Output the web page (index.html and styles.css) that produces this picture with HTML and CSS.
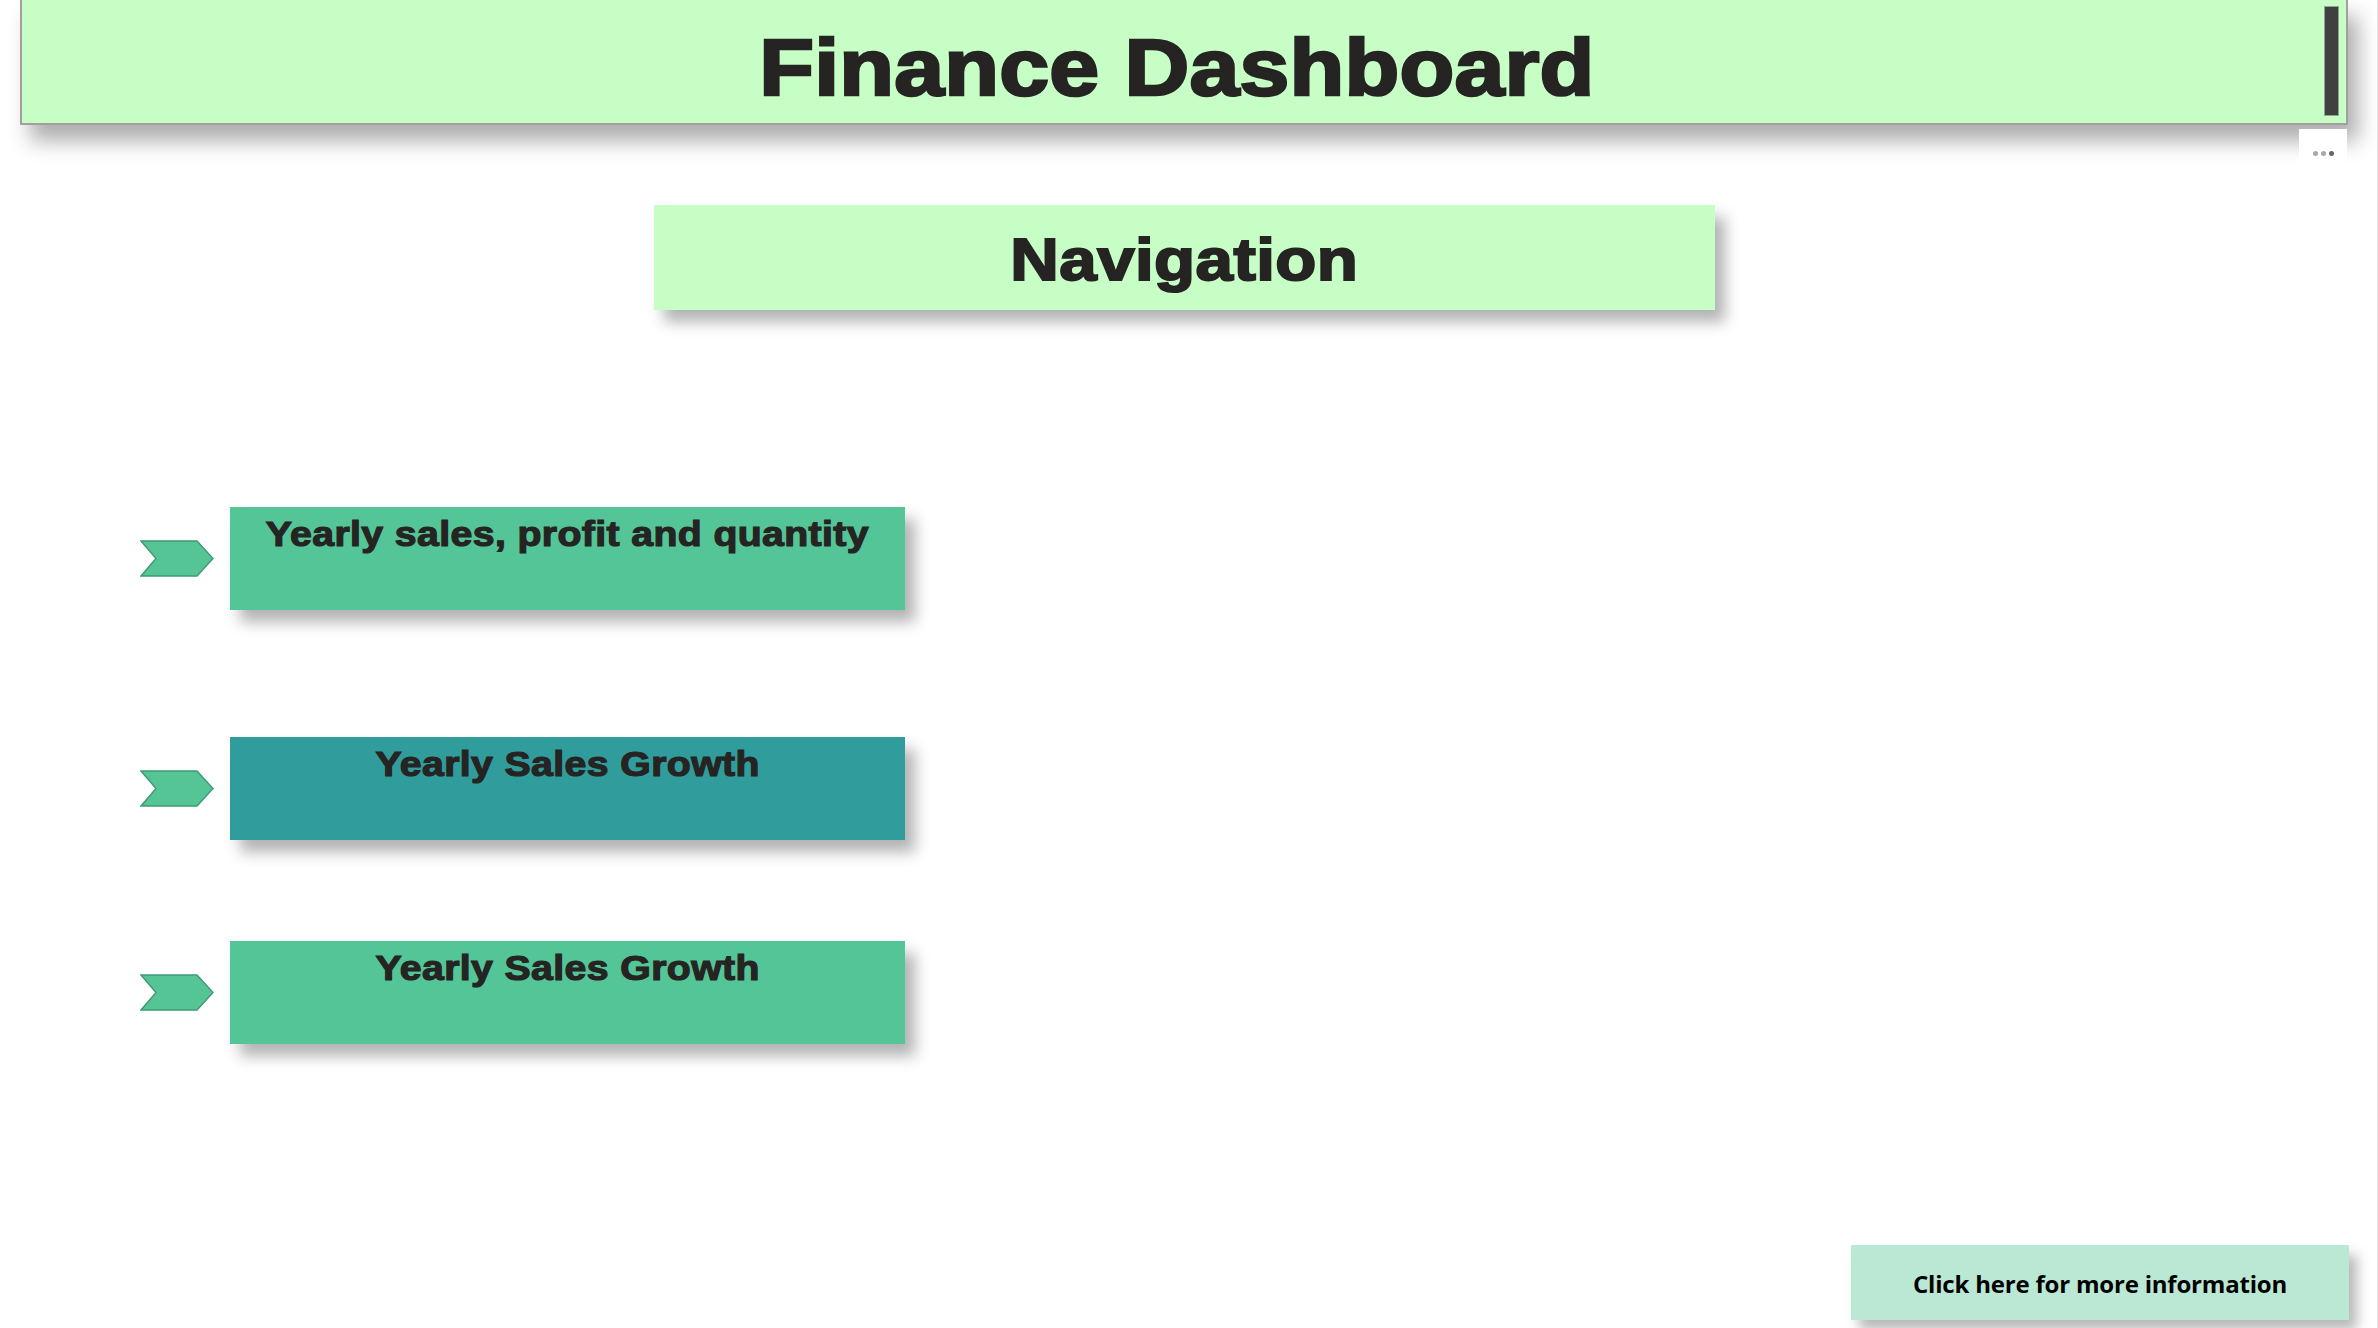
FILE: index.html
```html
<!DOCTYPE html>
<html lang="en">
<head>
<meta charset="utf-8">
<title>Finance Dashboard</title>
<link rel="stylesheet" href="styles.css">
</head>
<body>
<div class="page">
  <header class="topbar">
    <h1 class="title"><span class="wide">Finance Dashboard</span></h1>
    <div class="scroll-thumb"></div>
    <div class="more">
      <span class="dot light"></span><span class="dot light"></span><span class="dot dark"></span>
    </div>
  </header>

  <div class="nav-title"><span class="wide">Navigation</span></div>

  <nav class="nav-list">
    <div class="nav-row row-1">
      <svg class="chevron" viewBox="0 0 74 37" width="74" height="37"><polygon points="1,1 57,1 73,18.5 57,36 1,36 16,18.5"/></svg>
      <div class="nav-btn green"><span class="wide">Yearly sales, profit and quantity</span></div>
    </div>
    <div class="nav-row row-2">
      <svg class="chevron" viewBox="0 0 74 37" width="74" height="37"><polygon points="1,1 57,1 73,18.5 57,36 1,36 16,18.5"/></svg>
      <div class="nav-btn teal"><span class="wide">Yearly Sales Growth</span></div>
    </div>
    <div class="nav-row row-3">
      <svg class="chevron" viewBox="0 0 74 37" width="74" height="37"><polygon points="1,1 57,1 73,18.5 57,36 1,36 16,18.5"/></svg>
      <div class="nav-btn green"><span class="wide">Yearly Sales Growth</span></div>
    </div>
  </nav>

  <div class="info-btn">Click here for more information</div>
</div>
</body>
</html>
```

FILE: styles.css
```css
html, body {
  margin: 0;
  padding: 0;
  background: #ffffff;
}

.page {
  position: relative;
  width: 2378px;
  height: 1328px;
  box-sizing: border-box;
  border-right: 1px solid #e4e4e4;
  overflow: hidden;
  display: flex;
  flex-direction: column;
  align-items: flex-start;
  font-family: "Liberation Sans", Arial, sans-serif;
  color: #252423;
}

.wide {
  display: inline-block;
  transform: scaleX(1.12);
  transform-origin: center;
  white-space: nowrap;
}

.topbar {
  position: relative;
  margin-left: 20px;
  width: 2328px;
  height: 125px;
  box-sizing: border-box;
  background: #c6fec6;
  border: 2px solid #a39f9f;
  border-top: none;
  box-shadow: 10px 16px 20px rgba(0, 0, 0, 0.32);
  display: flex;
  justify-content: center;
}

.title {
  margin: 0;
  padding-top: 28px;
  padding-right: 14px;
  font-size: 80px;
  line-height: 80px;
  font-weight: 700;
  letter-spacing: 0.2px;
  -webkit-text-stroke: 2.6px #252423;
  color: #252423;
}

.scroll-thumb {
  position: absolute;
  top: 6px;
  right: 7px;
  width: 15px;
  height: 110px;
  box-sizing: border-box;
  background: #404040;
  border: 1px solid #8fa58f;
}

.more {
  position: absolute;
  top: 129px;
  right: -1px;
  width: 48px;
  height: 38px;
  box-sizing: border-box;
  padding-top: 22px;
  background: #ffffff;
  display: flex;
  align-items: flex-start;
  justify-content: center;
  gap: 3px;
}

.dot {
  width: 5px;
  height: 5px;
  border-radius: 50%;
}

.dot.light { background: #a8a8a8; }
.dot.dark { background: #666666; }

.nav-title {
  margin-top: 80px;
  margin-left: 654px;
  width: 1061px;
  height: 105px;
  box-sizing: border-box;
  padding-top: 25px;
  background: #c6fec6;
  box-shadow: 10px 12px 14px rgba(0, 0, 0, 0.3);
  text-align: center;
  font-size: 60px;
  line-height: 60px;
  font-weight: 700;
  letter-spacing: 0.4px;
  -webkit-text-stroke: 2px #252423;
}

.nav-list {
  margin-top: 197px;
  margin-left: 140px;
  display: flex;
  flex-direction: column;
}

.nav-row {
  display: flex;
  align-items: center;
  gap: 16px;
}

.row-2 { margin-top: 127px; }
.row-3 { margin-top: 101px; }

.chevron {
  display: block;
  fill: #55c596;
  stroke: #3e9a74;
  stroke-width: 1.4;
  stroke-linejoin: miter;
}

.nav-btn {
  width: 675px;
  height: 103px;
  box-sizing: border-box;
  padding-top: 9px;
  text-align: center;
  font-size: 35px;
  line-height: 35px;
  font-weight: 700;
  letter-spacing: 0.35px;
  -webkit-text-stroke: 1.2px #252423;
  box-shadow: 10px 12px 14px rgba(0, 0, 0, 0.3);
}

.nav-btn.green { background: #54c596; }
.nav-btn.teal { background: #319c9c; }

.info-btn {
  margin-top: auto;
  margin-bottom: 8px;
  align-self: flex-end;
  margin-right: 28px;
  width: 498px;
  height: 75px;
  box-sizing: border-box;
  background: #bae8d4;
  box-shadow: 8px 10px 12px rgba(0, 0, 0, 0.28);
  display: flex;
  align-items: center;
  justify-content: center;
  padding-top: 2px;
  font-family: "Open Sans", "Noto Sans", sans-serif;
  font-weight: 700;
  font-size: 24px;
  letter-spacing: -0.2px;
  color: #000000;
}
```
